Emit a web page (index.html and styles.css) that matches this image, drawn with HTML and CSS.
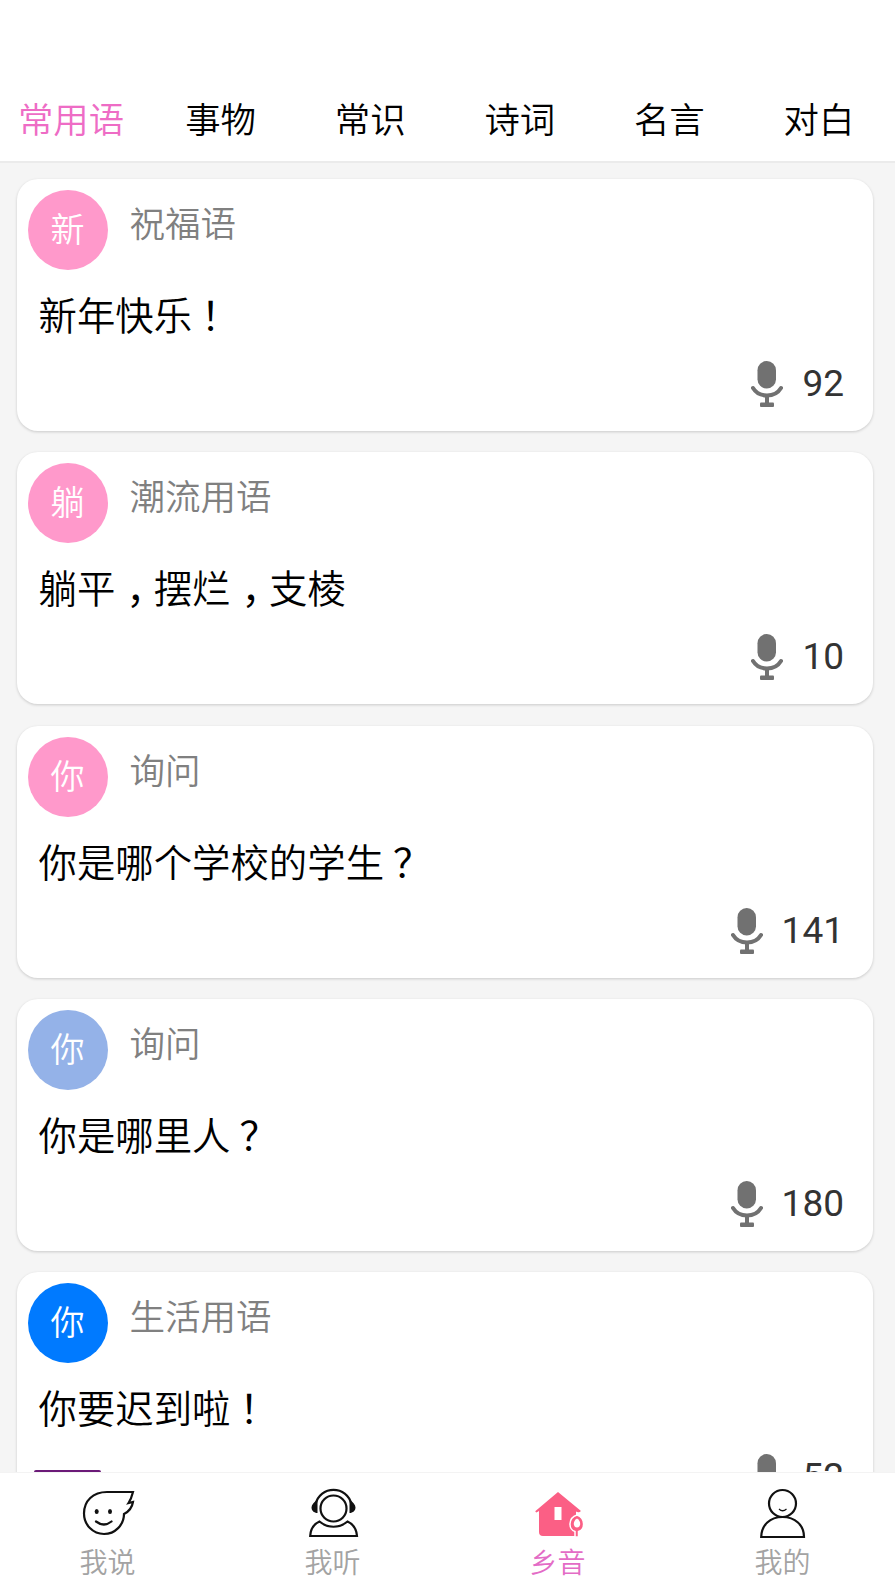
FILE: index.html
```html
<!DOCTYPE html>
<html lang="zh-CN">
<head>
    <meta charset="UTF-8">
    <meta name="viewport" content="width=device-width, initial-scale=1.0">
    <title>乡音</title>
    <link rel="stylesheet" href="styles.css">
</head>
<body>
    <svg class="sprite">
        <symbol id="mic" viewBox="0 0 32 46">
            <rect x="6.5" y="0" width="18.5" height="27.5" rx="9.2" fill="#717171"/>
            <path d="M2 27C5 32 10 34.500 16 34.500S27 32 30 27" fill="none" stroke="#717171" stroke-width="4" stroke-linecap="round"/>
            <path d="M16 34v8" stroke="#717171" stroke-width="4"/>
            <rect x="9" y="41.500" width="14" height="4.500" rx="1" fill="#717171"/>
        </symbol>
    </svg>

    <nav class="tabs">
        <a class="tab active">常用语</a>
        <a class="tab">事物</a>
        <a class="tab">常识</a>
        <a class="tab">诗词</a>
        <a class="tab">名言</a>
        <a class="tab">对白</a>
    </nav>

    <main class="list">
        <div class="card">
            <div class="card-head">
                <span class="avatar pink">新</span>
                <span class="category">祝福语</span>
            </div>
            <p class="phrase">新年快乐<span class="mark">！</span></p>
            <div class="count"><svg class="mic"><use href="#mic"/></svg><span>92</span></div>
        </div>
        <div class="card">
            <div class="card-head">
                <span class="avatar pink">躺</span>
                <span class="category">潮流用语</span>
            </div>
            <p class="phrase">躺平<span class="comma">，</span>摆烂<span class="comma">，</span>支棱</p>
            <div class="count"><svg class="mic"><use href="#mic"/></svg><span>10</span></div>
        </div>
        <div class="card">
            <div class="card-head">
                <span class="avatar pink">你</span>
                <span class="category">询问</span>
            </div>
            <p class="phrase">你是哪个学校的学生<span class="mark">？</span></p>
            <div class="count"><svg class="mic"><use href="#mic"/></svg><span>141</span></div>
        </div>
        <div class="card">
            <div class="card-head">
                <span class="avatar light-blue">你</span>
                <span class="category">询问</span>
            </div>
            <p class="phrase">你是哪里人<span class="mark">？</span></p>
            <div class="count"><svg class="mic"><use href="#mic"/></svg><span>180</span></div>
        </div>
        <div class="card">
            <div class="card-head">
                <span class="avatar blue">你</span>
                <span class="category">生活用语</span>
            </div>
            <p class="phrase">你要迟到啦<span class="mark">！</span></p>
            <div class="count"><svg class="mic"><use href="#mic"/></svg><span>52</span></div>
        </div>
        <div class="progress"></div>
    </main>

    <footer class="tabbar">
        <a class="item">
            <svg class="icon" viewBox="0 0 56 52" fill="none" stroke="#111" stroke-width="2.200">
                <path d="M53 5H27C13 5 4 14 4 26.500C4 38 13 47 24 47C35 47 44 38 44 27C48 25 52 21 53 15L48.500 16C50.500 13 52 9 53 5Z"/>
                <path d="M16 34.500Q24 40.500 31.500 34.500" stroke-linecap="round"/>
                <ellipse cx="16.700" cy="24.500" rx="2" ry="2.500" fill="#111" stroke="none"/>
                <ellipse cx="30" cy="24.500" rx="2" ry="2.500" fill="#111" stroke="none"/>
            </svg>
            <span>我说</span>
        </a>
        <a class="item">
            <svg class="icon" viewBox="0 0 56 52" fill="none" stroke="#111" stroke-width="2.200">
                <circle cx="28.500" cy="21.500" r="13"/>
                <path d="M10.500 17C13 8 20 2.800 28.500 2.800S44 8 46.500 17"/>
                <path d="M12.500 12.500V26C9 26 6.500 23.500 6.500 20.500S9 15.500 12.500 12.500ZM44.500 12.500V26C48 26 50.500 23.500 50.500 20.500S48 15.500 44.500 12.500Z" fill="#111" stroke="none"/>
                <path d="M14.500 34.500C9 37 5.500 42 5.200 49H52C51.500 42 48 37 42.500 34.500C34 41.500 23 41.500 14.500 34.500Z"/>
            </svg>
            <span>我听</span>
        </a>
        <a class="item active">
            <svg class="icon" viewBox="0 0 56 52">
                <path d="M28 5L51 24C49 26 47 25 46 24.500V49H13Q9 49 9 45V24L6.500 25.500Q5 25 5.500 24Z" fill="#fb5f85"/>
                <rect x="24.500" y="20" width="7" height="13" fill="#fff"/>
                <path d="M47 28C37.500 31 38.500 43 45 44.500V50H48.500V44.500C55 43 56 31 47 28Z" fill="#fb5f85" stroke="#fff" stroke-width="1.500"/>
                <path d="M47 31.500C42.500 34 43 40.500 47 40.500S51.500 34 47 31.500Z" fill="#fff"/>
            </svg>
            <span>乡音</span>
        </a>
        <a class="item">
            <svg class="icon" viewBox="0 0 56 52" fill="none" stroke="#111" stroke-width="2.200">
                <circle cx="27.500" cy="16.500" r="13.500"/>
                <path d="M24 22Q27.500 25.500 31.500 22" stroke-width="1.200"/>
                <path d="M6.200 50C6.500 38 15 30 27.500 30S49 38 49 50Z"/>
            </svg>
            <span>我的</span>
        </a>
    </footer>
</body>
</html>
```
FILE: styles.css
```css
body {
    margin: 0;
    height: 1595px;
    display: flex;
    flex-direction: column;
    overflow: hidden;
    background: #fff;
    font-family: Roboto, "Noto Sans CJK SC", sans-serif;
    font-weight: 350;
    color: #000;
}

.sprite {
    display: none;
}

.tabs {
    flex: none;
    box-sizing: border-box;
    height: 163px;
    padding: 80px 5px 0 0;
    display: flex;
    justify-content: space-between;
    border-bottom: 2px solid #ebebeb;
}

.tab {
    width: 142px;
    text-align: center;
    font-size: 35.400px;
    line-height: 83px;
}

.tab.active {
    color: #ee6cc5;
}

.list {
    flex: 1;
    min-height: 0;
    position: relative;
    overflow: hidden;
    box-sizing: border-box;
    padding: 16px 22px 0 17px;
    display: flex;
    flex-direction: column;
    gap: 21.300px;
    background: #f5f5f5;
}

.card {
    flex: none;
    height: 252px;
    box-sizing: border-box;
    padding: 11px 29px 0 10.500px;
    border-radius: 21px;
    background: #fff;
    box-shadow: 0 1px 3px rgba(0, 0, 0, 0.18);
}

.card-head {
    display: flex;
    gap: 22px;
}

.avatar {
    width: 80px;
    height: 80px;
    border-radius: 50%;
    text-align: center;
    font-size: 34px;
    line-height: 81px;
    color: #fff;
}

.pink {
    background: #ff99cb;
}

.light-blue {
    background: #94b2e8;
}

.blue {
    background: #007aff;
}

.category {
    font-size: 35.500px;
    line-height: 70px;
    color: #808080;
}

.phrase {
    margin: 19px 0 0 11px;
    font-size: 38.400px;
    line-height: 56px;
}

/* centre the full-width punctuation in its cell */
.mark {
    padding-left: 9px;
    letter-spacing: -9px;
    font-weight: 400;
}

.comma {
    padding-left: 11px;
    letter-spacing: -11px;
    font-weight: 400;
}

.count {
    margin-top: 16px;
    display: flex;
    justify-content: flex-end;
    gap: 19px;
    font-size: 37px;
    font-weight: 400;
    line-height: 45px;
    color: #333;
}

.mic {
    width: 32px;
    height: 46px;
}

/* sliver of the indicator showing above the tab bar */
.progress {
    position: absolute;
    left: 34px;
    bottom: 0;
    width: 67px;
    height: 2px;
    border-radius: 2px 2px 0 0;
    background: #6b1a78;
}

.tabbar {
    flex: none;
    box-sizing: border-box;
    height: 123px;
    margin-left: -5px;
    padding-top: 14px;
    display: flex;
    border-top: 1px solid #f3f3f3;
}

.item {
    flex: 1;
    display: flex;
    flex-direction: column;
    align-items: center;
    font-size: 28px;
    line-height: 49px;
    color: #a3a3a3;
}

.item.active {
    color: #e36cc6;
}

.icon {
    width: 56px;
    height: 52px;
}
```
